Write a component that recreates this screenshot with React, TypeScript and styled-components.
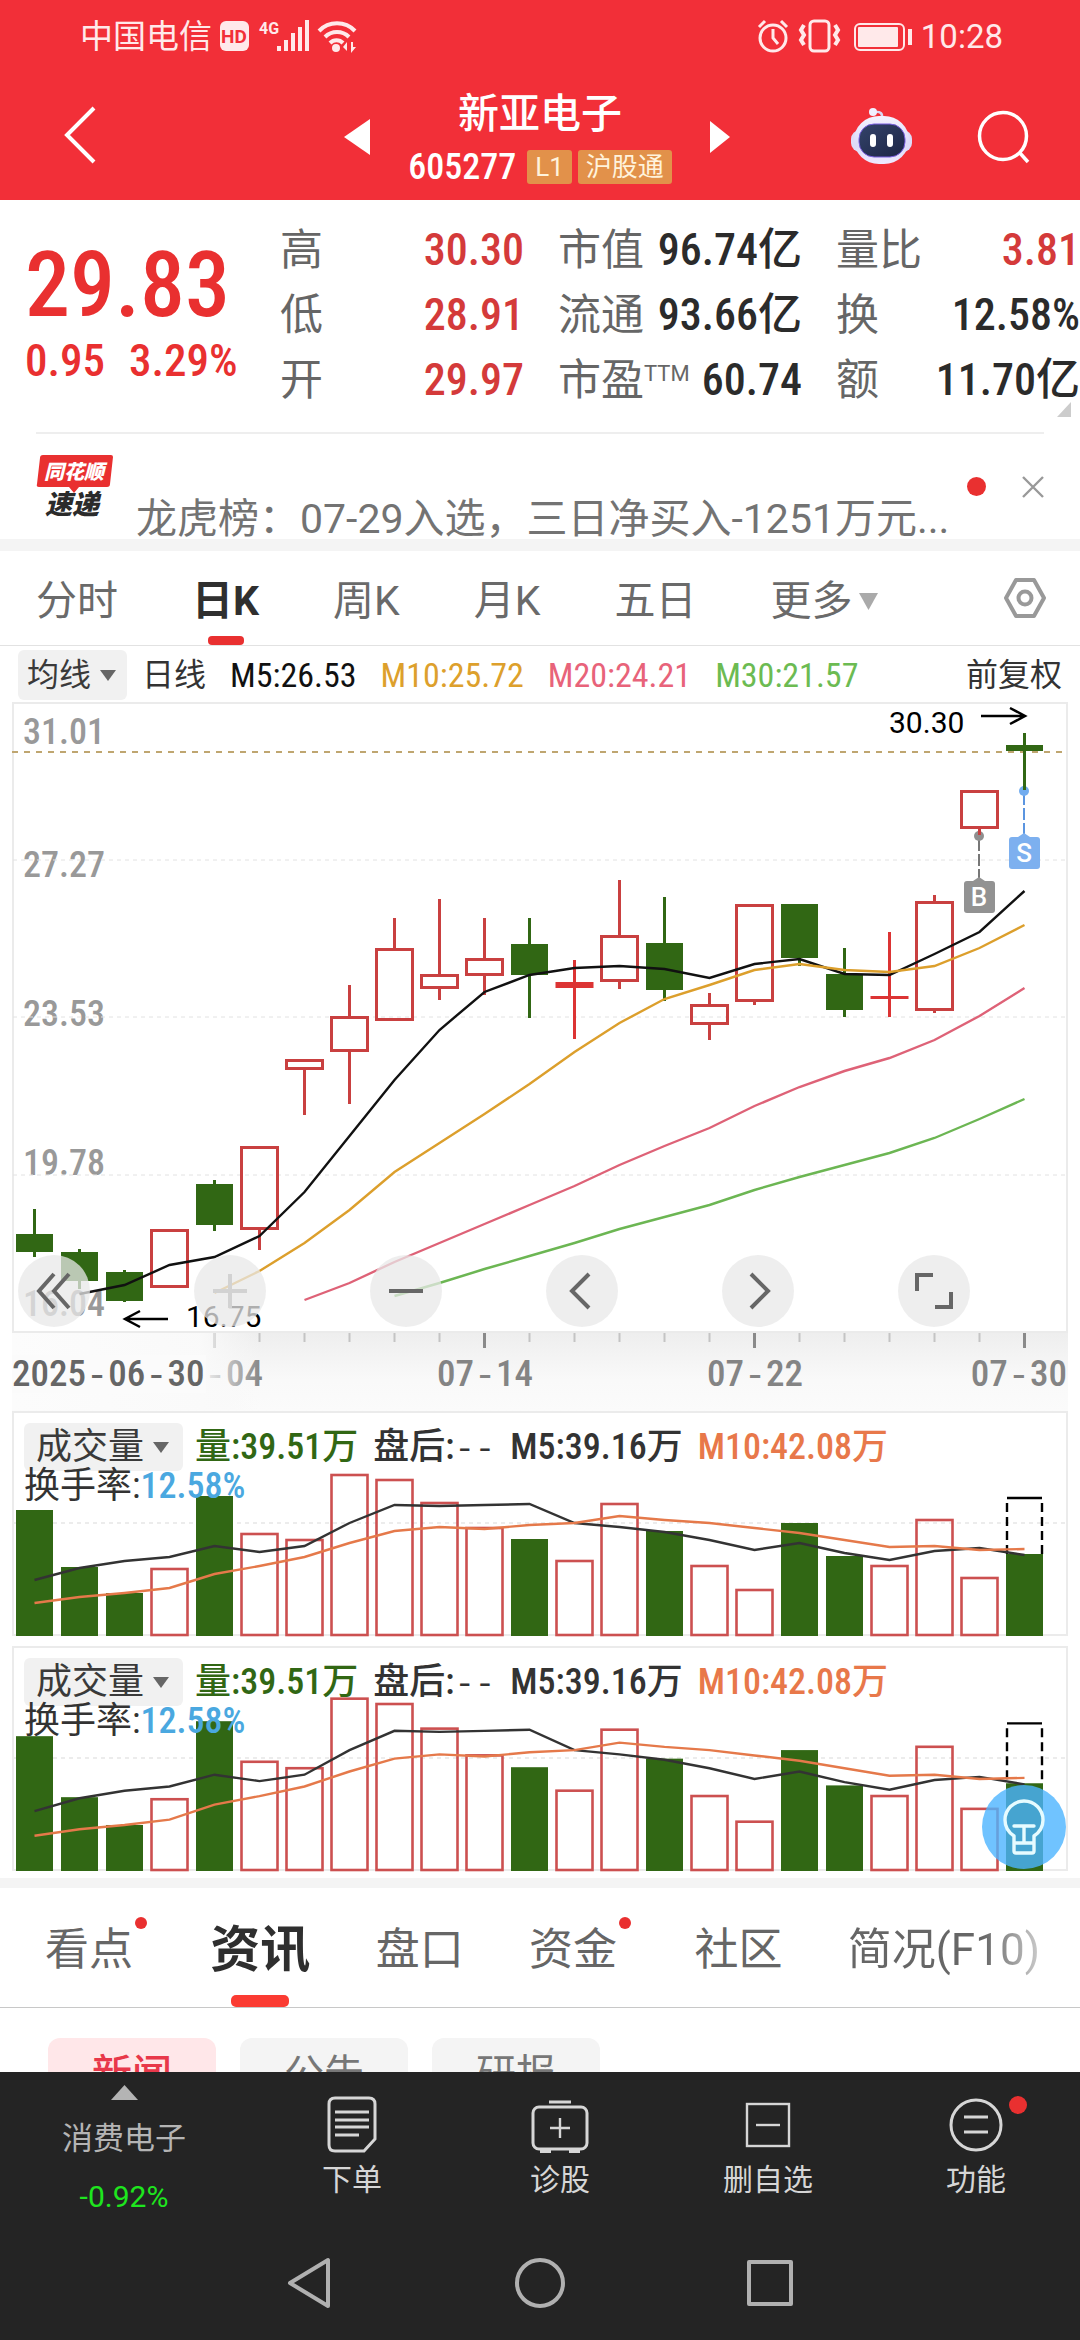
import React from "react";
import styled, { createGlobalStyle } from "styled-components";

const DIGITS = `"Roboto Condensed", Roboto, "Noto Sans CJK SC", sans-serif`;
const BODY = `Roboto, "Noto Sans CJK SC", sans-serif`;

const RED = "#e93030";
const RISE = "#c94040";
const FALL = "#316714";

const Global = createGlobalStyle`
  * { box-sizing: border-box; }
  body { margin: 0; background: #fff; font-family: ${BODY}; color: #333; }
  button, select { font: inherit; color: inherit; background: none; border: 0; padding: 0; margin: 0; }
  button { cursor: pointer; }
  a { color: inherit; text-decoration: none; }
  svg { display: block; flex: none; }
`;

const Screen = styled.div`
  display: flex;
  flex-direction: column;
  height: 100vh;
  overflow: hidden;
`;

const Content = styled.main`
  flex: 1;
  min-height: 0;
  overflow: hidden;
`;

/* ---------- header ---------- */

const Header = styled.header`
  background: #f22f38;
  color: #fff;
`;

const StatusBar = styled.div`
  display: flex;
  justify-content: space-between;
  align-items: center;
  height: 74px;
  padding: 0 77px 0 80px;
  font-size: 33px;
  line-height: 40px;
  color: #ffe9ea;
`;

const StatusGroup = styled.div`
  display: flex;
  align-items: center;
  gap: 8px;
`;

const TitleBar = styled.div`
  display: grid;
  grid-template-columns: 1fr auto 1fr;
  align-items: center;
  height: 126px;
  padding: 0 50px 0 44px;
`;

const TitleCenter = styled.div`
  display: flex;
  align-items: center;
  gap: 38px;
`;

const TitleText = styled.div`
  display: flex;
  flex-direction: column;
  align-items: center;
  gap: 12px;
`;

const StockName = styled.h1`
  margin: 0;
  font-size: 41px;
  line-height: 48px;
  font-weight: 500;
`;

const CodeLine = styled.div`
  display: flex;
  align-items: center;
  gap: 6px;
  font-family: ${DIGITS};
  font-size: 36px;
  line-height: 34px;
  font-weight: 500;
`;

const Tag = styled.span`
  padding: 0 8px;
  border-radius: 3px;
  background: #e2914a;
  color: #fff3dc;
  font-family: ${BODY};
  font-size: 26px;
  font-weight: 400;
  &:first-of-type { margin-left: 5px; }
`;

const TitleActions = styled.div`
  display: flex;
  align-items: center;
  justify-content: flex-end;
  gap: 64px;
`;

/* ---------- quote ---------- */

const Quote = styled.section`
  position: relative;
  display: flex;
  padding: 18px 0 19px;
  font-family: ${DIGITS};
`;

const PriceBlock = styled.div`
  width: 280px;
  padding: 20px 0 0 25px;
  color: ${RED};
  font-weight: 500;
`;

const Price = styled.div`
  font-size: 90px;
  line-height: 96px;
`;

const Change = styled.div`
  display: flex;
  gap: 24px;
  font-size: 45px;
  line-height: 54px;
`;

const Stats = styled.dl`
  flex: 1;
  display: grid;
  grid-template-columns: repeat(3, 1fr);
  column-gap: 34px;
  margin: 0;
`;

const Stat = styled.div`
  display: flex;
  justify-content: space-between;
  font-size: 43px;
  line-height: 65px;
`;

const StatLabel = styled.dt`
  color: #666;
  font-family: ${BODY};
  white-space: nowrap;
  sup { font-size: 22px; line-height: 0; vertical-align: 14px; }
`;

const StatValue = styled.dd<{ $up?: boolean }>`
  margin: 0;
  font-size: 44px;
  font-weight: 500;
  color: ${(p) => (p.$up ? "#d43a3a" : "#2b2b2b")};
  white-space: nowrap;
`;

const Corner = styled.svg`
  position: absolute;
  right: 9px;
  bottom: 15px;
`;

/* ---------- news ticker ---------- */

const Ticker = styled.section`
  display: flex;
  height: 107px;
  margin: 0 36px;
  border-top: 2px solid #eee;
  overflow: hidden;
`;

const TickerLogo = styled.svg`
  margin-top: 18px;
`;

const Headline = styled.a`
  align-self: flex-end;
  flex: 1;
  padding-left: 22px;
  font-size: 41px;
  line-height: 40px;
  color: #737373;
  white-space: nowrap;
`;

const TickerActions = styled.div`
  display: flex;
  align-items: center;
  gap: 36px;
`;

const Dot = styled.i<{ $size: number }>`
  display: block;
  width: ${(p) => p.$size}px;
  height: ${(p) => p.$size}px;
  border-radius: 50%;
  background: ${RED};
`;

const Band = styled.div<{ $h: number }>`
  height: ${(p) => p.$h}px;
  background: #f4f4f4;
`;

/* ---------- period tabs ---------- */

const Periods = styled.nav`
  display: flex;
  align-items: center;
  gap: 74px;
  height: 95px;
  padding: 0 34px 0 36px;
  border-bottom: 1px solid #e2e2e2;
`;

const Period = styled.button<{ $on?: boolean }>`
  position: relative;
  display: flex;
  align-items: center;
  gap: 6px;
  height: 94px;
  font-size: 41px;
  line-height: 88px;
  padding-top: 6px;
  font-weight: ${(p) => (p.$on ? 700 : 400)};
  color: ${(p) => (p.$on ? "#2f2f2f" : "#6a6a6a")};
  white-space: nowrap;
  &::after {
    content: "";
    display: ${(p) => (p.$on ? "block" : "none")};
    position: absolute;
    left: 50%;
    bottom: 0;
    width: 36px;
    height: 9px;
    margin-left: -18px;
    border-radius: 4px;
    background: ${RED};
  }
`;

const Settings = styled.button`
  margin-left: auto;
`;

/* ---------- moving averages ---------- */

const Averages = styled.div`
  display: flex;
  align-items: center;
  height: 56px;
  padding: 2px 18px 0;
  gap: 15px;
  font-size: 32px;
  line-height: 50px;
`;

const AverageList = styled.div`
  display: flex;
  flex: 1;
  gap: 24px;
`;

const Average = styled.span<{ $c: string }>`
  color: ${(p) => p.$c};
  font-family: ${DIGITS};
  font-size: 34px;
`;

const Picker = styled.label<{ $large?: boolean }>`
  display: flex;
  align-items: center;
  gap: 8px;
  height: ${(p) => (p.$large ? 48 : 50)}px;
  padding: 0 ${(p) => (p.$large ? 14 : 11)}px 0 ${(p) => (p.$large ? 12 : 9)}px;
  border-radius: 6px;
  background: #f1f1f1;
  color: #3a3a3a;
  select { appearance: none; line-height: 46px; outline: 0; }
`;

/* ---------- charts ---------- */

const Charts = styled.section`
  display: flex;
  flex-direction: column;
  gap: 10px;
  padding: 0 12px 7px;
`;

const ChartBox = styled.div`
  position: relative;
`;

const Plot = styled.svg`
  width: 100%;
  height: auto;
  overflow: visible;
  font-family: ${DIGITS};
`;

const ChartControls = styled.div`
  position: absolute;
  left: 6px;
  top: 553px;
  display: flex;
  gap: 104px;
`;

const RoundButton = styled.button<{ $dim?: boolean }>`
  display: grid;
  place-items: center;
  width: 72px;
  height: 72px;
  border-radius: 50%;
  background: rgba(232, 232, 232, 0.75);
  color: ${(p) => (p.$dim ? "#d2d2d2" : "#666")};
`;

const VolumeBox = styled.div`
  position: relative;
  display: grid;
  & > * { grid-area: 1 / 1; }
`;

const VolumeLegend = styled.div`
  z-index: 1;
  padding: 12px 12px 0;
  font-family: ${DIGITS};
  font-size: 36px;
  white-space: nowrap;
`;

const LegendRow = styled.div`
  display: flex;
  align-items: center;
  gap: 15px;
  height: 48px;
  line-height: 48px;
  & > :first-child { margin-right: -3px; }
`;

const LegendItem = styled.span<{ $c: string }>`
  color: ${(p) => p.$c};
  font-weight: 500;
`;

const Dashes = styled.span`
  font-family: "Liberation Mono", monospace;
  font-size: 34px;
  line-height: 0;
`;

const Turnover = styled.div`
  height: 30px;
  line-height: 30px;
  color: #333;
  b { color: #4aa8e0; font-weight: 500; }
`;

const Assistant = styled.button`
  position: absolute;
  right: 2px;
  bottom: 2px;
  z-index: 2;
  display: grid;
  place-items: center;
  width: 84px;
  height: 84px;
  border-radius: 50%;
  background: rgba(76, 180, 255, 0.8);
`;

/* ---------- info tabs ---------- */

const InfoTabs = styled.nav`
  display: flex;
  justify-content: space-between;
  align-items: center;
  height: 120px;
  padding: 0 40px 0 45px;
  border-bottom: 1px solid #c8c8c8;
`;

const InfoTab = styled.a<{ $on?: boolean; $fade?: boolean; $dot?: boolean }>`
  position: relative;
  height: 119px;
  margin-right: ${(p) => (p.$dot ? 12 : 0)}px;
  font-size: ${(p) => (p.$on ? 50 : 44)}px;
  line-height: 124px;
  font-weight: ${(p) => (p.$on ? 700 : 400)};
  color: ${(p) => (p.$on ? "#2f2f2f" : "#666")};
  white-space: nowrap;
  ${(p) =>
    p.$fade &&
    `background: linear-gradient(90deg, #666 70%, #ccc 100%); background-clip: text; color: transparent;`}
  & > i { position: absolute; right: -14px; top: 29px; }
  &::after {
    content: "";
    display: ${(p) => (p.$on ? "block" : "none")};
    position: absolute;
    left: 50%;
    bottom: 0;
    width: 58px;
    height: 12px;
    margin-left: -29px;
    border-radius: 5px;
    background: #fb3b32;
  }
`;

const Chips = styled.div`
  display: flex;
  gap: 24px;
  padding: 30px 48px;
`;

const Chip = styled.button<{ $on?: boolean }>`
  width: 168px;
  height: 74px;
  border-radius: 12px;
  background: ${(p) => (p.$on ? "#ffe7e9" : "#f4f4f4")};
  color: ${(p) => (p.$on ? "#e8384a" : "#777")};
  font-size: 40px;
  line-height: 74px;
  font-weight: ${(p) => (p.$on ? 500 : 400)};
`;

/* ---------- bottom dock ---------- */

const Dock = styled.footer`
  background: #242424;
  color: #d6d6d6;
`;

const Actions = styled.div`
  display: grid;
  grid-template-columns: 248px repeat(4, 1fr);
  height: 154px;
  font-size: 30px;
  line-height: 36px;
`;

const IndexLink = styled.a`
  display: flex;
  flex-direction: column;
  align-items: center;
  padding-top: 13px;
  font-size: 31px;
  line-height: 36px;
  color: #b4b4b4;
  b { margin-top: 22px; font-size: 30px; font-weight: 400; color: #1ee61e; }
  span { margin-top: 21px; }
`;

const Action = styled.button`
  position: relative;
  display: flex;
  flex-direction: column;
  align-items: center;
  justify-content: flex-start;
  padding-top: 24px;
  gap: 8px;
  & > i { position: absolute; left: 50%; top: 24px; margin-left: 33px; }
`;

const SystemNav = styled.div`
  display: flex;
  justify-content: center;
  align-items: center;
  gap: 174px;
  height: 114px;
`;

/* ---------- data ---------- */

type Candle = [high: number, top: number, bottom: number, low: number, up: boolean];

const candles: Candle[] = [
  [1210, 1235, 1253, 1258, false],
  [1250, 1253, 1282, 1290, false],
  [1271, 1273, 1302, 1303, false],
  [1230, 1230, 1289, 1289, true],
  [1181, 1185, 1226, 1232, false],
  [1147, 1147, 1231, 1251, true],
  [1060, 1060, 1071, 1116, true],
  [986, 1017, 1053, 1105, true],
  [919, 949, 1022, 1022, true],
  [900, 975, 990, 1001, true],
  [919, 959, 977, 996, true],
  [919, 945, 976, 1019, false],
  [961, 983, 989, 1040, true],
  [881, 936, 983, 990, true],
  [898, 944, 991, 1002, false],
  [994, 1005, 1026, 1041, true],
  [905, 905, 1003, 1006, true],
  [905, 905, 959, 967, false],
  [949, 975, 1011, 1018, false],
  [933, 997, 1000, 1018, true],
  [896, 902, 1012, 1014, true],
  [791, 791, 830, 836, true],
  [734, 746, 752, 791, false],
];

const priceLines = [
  { color: "#111", from: 1, ys: [1295, 1286, 1266, 1258, 1237, 1193, 1137, 1081, 1031, 993, 976, 969, 967, 970, 979, 965, 960, 975, 976, 955, 933, 892] },
  { color: "#dc9f2c", from: 4, ys: [1294, 1272, 1244, 1211, 1173, 1144, 1115, 1085, 1053, 1024, 1000, 986, 971, 965, 971, 973, 967, 949, 926] },
  { color: "#de6277", from: 6, ys: [1301, 1284, 1263, 1244, 1225, 1206, 1187, 1166, 1147, 1129, 1107, 1088, 1072, 1059, 1041, 1017, 989] },
  { color: "#6cb653", from: 8, ys: [1297, 1284, 1270, 1257, 1244, 1230, 1218, 1206, 1191, 1178, 1166, 1154, 1139, 1120, 1100] },
];

const priceScale: [string, number][] = [
  ["31.01", 745],
  ["27.27", 878],
  ["23.53", 1027],
  ["19.78", 1176],
  ["16.04", 1317],
];

const volumes = [126, 69, 43, 68, 140, 103, 97, 162, 157, 134, 109, 97, 76, 133, 105, 71, 47, 113, 80, 71, 117, 59, 82];
const volumeUp = [0, 0, 0, 1, 0, 1, 1, 1, 1, 1, 1, 0, 1, 1, 0, 1, 1, 0, 0, 1, 1, 1, 0];
const volume5 = [56, 68, 75, 79, 90, 84, 90, 113, 131, 130, 131, 132, 113, 109, 104, 96, 86, 93, 83, 76, 85, 88, 81];
const volume10 = [33, 39, 43, 48, 62, 70, 79, 93, 105, 109, 107, 111, 113, 120, 116, 113, 108, 103, 96, 89, 90, 86, 87];
const projected = 138;

const colX = (i: number) => 34.5 + 45 * i;
const toPoints = (ys: number[], from = 0) => ys.map((y, i) => `${colX(i + from)},${y}`).join(" ");

/* ---------- icons ---------- */

const Caret = ({ w = 16, h = 11, color = "#666" }: { w?: number; h?: number; color?: string }) => (
  <svg width={w} height={h} viewBox="0 0 16 11" preserveAspectRatio="none" aria-hidden="true">
    <path d="M0 0h16L8 11z" fill={color} />
  </svg>
);

const SignalIcons = () => (
  <svg width="138" height="36" viewBox="220 19 138 36" fill="#ffe9ea" aria-label="HD 4G">
    <rect x="220" y="21" width="29" height="30" rx="6" />
    <text x="234" y="43" fontSize="19" fontWeight="700" textAnchor="middle" fill="#f22f38">HD</text>
    <text x="259" y="34" fontSize="16" fontWeight="700">4G</text>
    <path d="M277 46h4v5h-4zM284 40h4v11h-4zM291 33h4v18h-4zM298 27h4v24h-4zM305 20h4v31h-4z" />
    <g fill="none" stroke="#ffe9ea" strokeWidth="4">
      <path d="M319 31a25 25 0 0 1 36 0" />
      <path d="M325 37a17 17 0 0 1 24 0" />
      <path d="M330 43a9 9 0 0 1 13 0" />
    </g>
    <circle cx="336" cy="48" r="4" />
    <path d="M347 42v9l-4-4zM351 42v11l5-6h-3v-5z" />
  </svg>
);

const StatusIcons = () => (
  <svg width="156" height="36" viewBox="755 19 156 36" fill="none" stroke="#ffe9ea" strokeWidth="3" aria-hidden="true">
    <circle cx="771" cy="38" r="13" />
    <path d="M771 29v9l5 6M757 27l6-6M785 27l-6-6" />
    <rect x="808" y="21" width="19" height="30" rx="4" />
    <path d="M802 25l-3 5 3 5-3 5 3 5M833 25l3 5-3 5 3 5-3 5" strokeWidth="4" />
    <rect x="853" y="24" width="49" height="26" rx="5" strokeWidth="2" />
    <rect x="856" y="27" width="40" height="20" rx="1" fill="#ffe9ea" stroke="none" />
    <path d="M908 29v16" strokeWidth="4" />
  </svg>
);

const Robot = () => (
  <svg width="61" height="58" viewBox="0 0 61 58" aria-hidden="true">
    <defs>
      <linearGradient id="head" x1="0" y1="0" x2="0" y2="1">
        <stop offset="0" stopColor="#f4f2ff" />
        <stop offset="0.6" stopColor="#dcdaf8" />
        <stop offset="1" stopColor="#efeaff" />
      </linearGradient>
      <linearGradient id="visor" x1="0" y1="0" x2="1" y2="1">
        <stop offset="0" stopColor="#34436a" />
        <stop offset="1" stopColor="#1c2545" />
      </linearGradient>
    </defs>
    <path d="M31 10q1-7-7-6" fill="none" stroke="#d9d6f2" strokeWidth="2.5" />
    <circle cx="22" cy="4" r="4" fill="#f1efff" />
    <rect x="0" y="22" width="61" height="22" rx="9" fill="#dedcf8" />
    <rect x="3" y="8" width="55" height="48" rx="25" fill="url(#head)" />
    <rect x="8" y="16" width="46" height="33" rx="15" fill="url(#visor)" stroke="#7a5fe0" strokeWidth="1" />
    <path d="M22 29v7M39 29v7" stroke="#fff" strokeWidth="6" strokeLinecap="round" />
  </svg>
);

/* ---------- chart parts ---------- */

const DateText = ({ x, color, parts, anchor }: { x: number; color: string; parts: string[]; anchor: "start" | "middle" | "end" }) => (
  <text x={x} y={1387} fontSize="37" fontWeight="500" fill={color} textAnchor={anchor}>
    {parts.map((p, i) => (
      <React.Fragment key={i}>
        {i > 0 && <tspan fontFamily="Liberation Mono, monospace">-</tspan>}
        {p}
      </React.Fragment>
    ))}
  </text>
);

const PricePlot = () => (
  <Plot viewBox="12 703 1056 699" role="img" aria-label="日K">
    <defs>
      <linearGradient id="axisShade" x1="0" y1="0" x2="0" y2="1">
        <stop offset="0" stopColor="#eeeeee" />
        <stop offset="0.6" stopColor="#f9f9f9" />
        <stop offset="1" stopColor="#fbfbfb" />
      </linearGradient>
      <linearGradient id="axisFade" x1="0" y1="0" x2="1" y2="0">
        <stop offset="0" stopColor="#fcfcfc" />
        <stop offset="0.76" stopColor="#fafafa" stopOpacity="0.95" />
        <stop offset="1" stopColor="#f8f8f8" stopOpacity="0" />
      </linearGradient>
    </defs>
    <rect x="12" y="1334" width="1056" height="78" fill="url(#axisShade)" />
    <rect x="13" y="704" width="1054" height="629" fill="#fff" stroke="#ebebeb" strokeWidth="2" />
    <g fontSize="36" fontWeight="500" fill="#999">
      {priceScale.map(([t, y]) => (
        <text key={t} x="23" y={y}>{t}</text>
      ))}
    </g>
    <path d="M13 861H1066M13 1018H1066M13 1176H1066" stroke="#e2e2e2" strokeWidth="1" strokeDasharray="4 4" />
    <path d="M12 753H1066" stroke="#bfa670" strokeWidth="2" strokeDasharray="6 6" />
    <path d="M979 840V882" stroke="#777" strokeWidth="2" strokeDasharray="12 3" />
    <circle cx="979" cy="837" r="5" fill="#8f8f8f" />
    <path d="M1024 794V838" stroke="#5b95e0" strokeWidth="2" strokeDasharray="12 3" />
    <circle cx="1024" cy="792" r="5" fill="#72acef" />
    {candles.map(([high, top, bottom, low, up], i) => {
      const x = colX(i);
      if (!up) {
        return (
          <g key={i} fill={FALL}>
            <rect x={x - 1.5} y={high} width="3" height={low - high} />
            <rect x={x - 18.5} y={top} width="37" height={bottom - top} />
          </g>
        );
      }
      if (bottom - top < 7) {
        return (
          <g key={i} fill="#dc3434">
            <rect x={x - 1.5} y={high} width="3" height={low - high} />
            <rect x={x - 19} y={top} width="38" height={bottom - top} />
          </g>
        );
      }
      return (
        <g key={i} stroke={RISE} strokeWidth="3" fill="none">
          <path d={`M${x} ${high}V${top}M${x} ${bottom}V${low}`} />
          <rect x={x - 18} y={top + 1.5} width="36" height={bottom - top - 3} />
        </g>
      );
    })}
    <g fill="none" strokeWidth="2.4">
      {priceLines.map((l) => (
        <polyline key={l.color} points={toPoints(l.ys, l.from)} stroke={l.color} />
      ))}
    </g>
    <g fontSize="30" fill="#000" fontFamily="Roboto">
      <text x="889" y="734">30.30</text>
      <text x="186" y="1328">16.75</text>
    </g>
    <path d="M981 717H1024M1010 709L1025 717L1010 725M168 1320H125M140 1312L125 1320L140 1328" fill="none" stroke="#000" strokeWidth="2.5" />
    <path d="M973 882L979 878L985 882z" fill="#929292" />
    <rect x="964" y="882" width="31" height="32" rx="3" fill="#929292" />
    <path d="M1018 838L1024 834L1030 838z" fill="#7db0ef" />
    <rect x="1009" y="838" width="31" height="32" rx="3" fill="#7db0ef" />
    <g fontSize="26" fontWeight="500" fill="#fff" textAnchor="middle" fontFamily="Roboto">
      <text x="979" y="907">B</text>
      <text x="1024" y="863">S</text>
    </g>
    {candles.slice(4).map((_, k) => {
      const i = k + 4;
      const major = (i - 4) % 6 === 0;
      return (
        <rect key={i} x={colX(i) - (major ? 1.5 : 1)} y="1334" width={major ? 3 : 2} height={major ? 15 : 9} fill={major ? "#8a8a8a" : "#c4c4c4"} />
      );
    })}
    <DateText x={215} color="#888" parts={["07", "04"]} anchor="middle" />
    <rect x="12" y="1334" width="248" height="77" fill="url(#axisFade)" />
    <rect x="12" y="1356" width="194" height="38" fill="#fbfbfb" />
    <DateText x={12} color="#666" parts={["2025", "06", "30"]} anchor="start" />
    <DateText x={485} color="#848484" parts={["07", "14"]} anchor="middle" />
    <DateText x={755} color="#848484" parts={["07", "22"]} anchor="middle" />
    <DateText x={1067} color="#848484" parts={["07", "30"]} anchor="end" />
  </Plot>
);

const VolumePanel = ({ scale, children }: { scale: number; children?: React.ReactNode }) => {
  const y = (v: number) => 225 - v * scale;
  return (
    <VolumeBox>
      <Plot viewBox="12 0 1056 225" role="img" aria-label="成交量">
        <rect x="13" y="1" width="1054" height="223" fill="#fff" stroke="#ebebeb" strokeWidth="2" />
        <path d="M13 112H1066" stroke="#ececec" strokeWidth="2" strokeDasharray="4 4" />
        {volumes.map((v, i) =>
          volumeUp[i] ? (
            <rect key={i} x={colX(i) - 18} y={y(v) + 1} width="36" height={v * scale - 2} fill="none" stroke="#cc5050" strokeWidth="2.6" />
          ) : (
            <rect key={i} x={colX(i) - 18.5} y={y(v)} width="37" height={v * scale} fill={FALL} />
          ),
        )}
        <path d={`M1007 ${y(projected)}H1042`} stroke="#000" strokeWidth="2.4" />
        <path d={`M1007 ${y(projected) + 5}V${y(82)}M1042 ${y(projected) + 5}V${y(82)}`} stroke="#000" strokeWidth="2.4" strokeDasharray="9 5" />
        <g fill="none" strokeWidth="2.4">
          <polyline points={toPoints(volume5.map(y))} stroke="#333" />
          <polyline points={toPoints(volume10.map(y))} stroke="#e5794a" />
        </g>
      </Plot>
      <VolumeLegend>
        <LegendRow>
          <Picker $large>
            <select aria-label="指标">
              <option>成交量</option>
            </select>
            <Caret />
          </Picker>
          <LegendItem $c={FALL}>量:39.51万</LegendItem>
          <LegendItem $c="#333">
            盘后:<Dashes>--</Dashes>
          </LegendItem>
          <LegendItem $c="#333">M5:39.16万</LegendItem>
          <LegendItem $c="#e8784a">M10:42.08万</LegendItem>
        </LegendRow>
        <Turnover>
          换手率:<b>12.58%</b>
        </Turnover>
      </VolumeLegend>
      {children}
    </VolumeBox>
  );
};

/* ---------- page ---------- */

const stats: { label: React.ReactNode; value: string; up?: boolean }[] = [
  { label: "高", value: "30.30", up: true },
  { label: "市值", value: "96.74亿" },
  { label: "量比", value: "3.81", up: true },
  { label: "低", value: "28.91", up: true },
  { label: "流通", value: "93.66亿" },
  { label: "换", value: "12.58%" },
  { label: "开", value: "29.97", up: true },
  { label: <>市盈<sup>TTM</sup></>, value: "60.74" },
  { label: "额", value: "11.70亿" },
];

export default function App() {
  return (
    <Screen>
      <Global />
      <Header>
        <StatusBar>
          <StatusGroup>
            <span>中国电信</span>
            <SignalIcons />
          </StatusGroup>
          <StatusGroup>
            <StatusIcons />
            <span>10:28</span>
          </StatusGroup>
        </StatusBar>
        <TitleBar>
          <div>
            <button aria-label="返回">
              <svg width="56" height="58" viewBox="-15 0 56 58" fill="none" stroke="#fff" strokeWidth="4">
                <path d="M35 2L8 29L35 56" />
              </svg>
            </button>
          </div>
          <TitleCenter>
            <button aria-label="上一只">
              <svg width="26" height="36" viewBox="0 0 26 36"><path d="M26 0v36L0 18z" fill="#fff" /></svg>
            </button>
            <TitleText>
              <StockName>新亚电子</StockName>
              <CodeLine>
                605277
                <Tag>L1</Tag>
                <Tag>沪股通</Tag>
              </CodeLine>
            </TitleText>
            <button aria-label="下一只">
              <svg width="20" height="32" viewBox="0 0 20 32"><path d="M0 0v32L20 16z" fill="#fff" /></svg>
            </button>
          </TitleCenter>
          <TitleActions>
            <button aria-label="智能助手"><Robot /></button>
            <button aria-label="搜索">
              <svg width="54" height="54" viewBox="0 0 54 54" fill="none" stroke="#fff" strokeWidth="3.5">
                <circle cx="27" cy="26" r="23.5" />
                <path d="M43 42l9 10" />
              </svg>
            </button>
          </TitleActions>
        </TitleBar>
      </Header>

      <Content>
        <Quote>
          <PriceBlock>
            <Price>29.83</Price>
            <Change>
              <span>0.95</span>
              <span>3.29%</span>
            </Change>
          </PriceBlock>
          <Stats>
            {stats.map((s) => (
              <Stat key={s.value}>
                <StatLabel>{s.label}</StatLabel>
                <StatValue $up={s.up}>{s.value}</StatValue>
              </Stat>
            ))}
          </Stats>
          <Corner width="14" height="15" viewBox="0 0 14 15" aria-hidden="true">
            <path d="M14 0v15H0z" fill="#ccc" />
          </Corner>
        </Quote>

        <Ticker>
          <TickerLogo width="78" height="76" viewBox="0 0 78 76" fontStyle="italic" fontWeight="900" textAnchor="middle" fontFamily="Noto Sans CJK SC">
            <path d="M7 3h68q2 0 2 2l-3 27q0 3-3 3H43l-5 6-5-6H3q-3 0-2-3L4 6q0-3 3-3z" fill={RED} />
            <text x="38" y="27" fontSize="20" fill="#fff">同花顺</text>
            <text x="36" y="62" fontSize="27" fill="#2b2b2b">速递</text>
          </TickerLogo>
          <Headline href="#news">龙虎榜：07-29入选，三日净买入-1251万元...</Headline>
          <TickerActions>
            <Dot $size={19} />
            <button aria-label="关闭">
              <svg width="22" height="22" viewBox="0 0 22 22" stroke="#999" strokeWidth="2.4"><path d="M1 1l20 20M21 1L1 21" /></svg>
            </button>
          </TickerActions>
        </Ticker>
        <Band $h={12} />

        <Periods>
          <Period>分时</Period>
          <Period $on>日K</Period>
          <Period>周K</Period>
          <Period>月K</Period>
          <Period>五日</Period>
          <Period>更多<Caret w={19} h={17} color="#aaa" /></Period>
          <Settings aria-label="设置">
            <svg width="42" height="42" viewBox="0 0 42 42" fill="none" stroke="#999" strokeWidth="4" strokeLinejoin="round">
              <path d="M12 3h18l10 18-10 18H12L2 21z" />
              <circle cx="21" cy="21" r="6.5" />
            </svg>
          </Settings>
        </Periods>

        <Averages>
          <Picker>
            <select aria-label="主图指标">
              <option>均线</option>
            </select>
            <Caret />
          </Picker>
          <AverageList>
            <span>日线</span>
            <Average $c="#111">M5:26.53</Average>
            <Average $c="#dda02c">M10:25.72</Average>
            <Average $c="#e8637a">M20:24.21</Average>
            <Average $c="#6cbb52">M30:21.57</Average>
          </AverageList>
          <button>前复权</button>
        </Averages>

        <Charts>
          <ChartBox>
            <PricePlot />
            <ChartControls>
              <RoundButton aria-label="最早">
                <svg width="36" height="38" viewBox="0 0 36 38" fill="none" stroke="currentColor" strokeWidth="4"><path d="M18 2L3 19L18 36M33 2L18 19L33 36" /></svg>
              </RoundButton>
              <RoundButton aria-label="放大" $dim>
                <svg width="34" height="34" viewBox="0 0 34 34" stroke="currentColor" strokeWidth="4"><path d="M0 17H34M17 0V34" /></svg>
              </RoundButton>
              <RoundButton aria-label="缩小">
                <svg width="34" height="34" viewBox="0 0 34 34" stroke="currentColor" strokeWidth="4"><path d="M0 17H34" /></svg>
              </RoundButton>
              <RoundButton aria-label="左移">
                <svg width="26" height="38" viewBox="0 0 26 38" fill="none" stroke="currentColor" strokeWidth="4"><path d="M20 2L3 19L20 36" /></svg>
              </RoundButton>
              <RoundButton aria-label="右移">
                <svg width="26" height="38" viewBox="0 0 26 38" fill="none" stroke="currentColor" strokeWidth="4"><path d="M6 2L23 19L6 36" /></svg>
              </RoundButton>
              <RoundButton aria-label="全屏">
                <svg width="38" height="38" viewBox="0 0 38 38" fill="none" stroke="currentColor" strokeWidth="4"><path d="M2 19V3H18M20 35H36V20" /></svg>
              </RoundButton>
            </ChartControls>
          </ChartBox>
          <VolumePanel scale={1} />
          <VolumePanel scale={1.07}>
            <Assistant aria-label="提示">
              <svg width="42" height="56" viewBox="0 0 42 56" fill="none" stroke="#e6fbff" strokeWidth="3.4" strokeLinejoin="round" strokeLinecap="round">
                <path d="M11 44v-7C5 33 2 27 2 21a19 19 0 0 1 38 0c0 6-3 12-9 16v7M11 44h20v8q0 2-2 2H13q-2 0-2-2zM11 27h20M21 27v17" />
              </svg>
            </Assistant>
          </VolumePanel>
        </Charts>
        <Band $h={10} />

        <InfoTabs>
          <InfoTab href="#view" $dot>看点<Dot $size={12} /></InfoTab>
          <InfoTab href="#news" $on>资讯</InfoTab>
          <InfoTab href="#pan">盘口</InfoTab>
          <InfoTab href="#fund" $dot>资金<Dot $size={12} /></InfoTab>
          <InfoTab href="#club">社区</InfoTab>
          <InfoTab href="#f10" $fade>简况(F10)</InfoTab>
        </InfoTabs>
        <Chips>
          <Chip $on>新闻</Chip>
          <Chip>公告</Chip>
          <Chip>研报</Chip>
        </Chips>
      </Content>

      <Dock>
        <Actions>
          <IndexLink href="#index">
            <svg width="27" height="15" viewBox="0 0 27 15" aria-hidden="true"><path d="M0 15L13.5 0L27 15z" fill="#b4b4b4" /></svg>
            <span>消费电子</span>
            <b>-0.92%</b>
          </IndexLink>
          <Action>
            <svg width="50" height="58" viewBox="0 0 50 58" fill="none" stroke="#d6d6d6" strokeWidth="3">
              <path d="M8 2h34q6 0 6 6v35L37 55H8q-6 0-6-6V8q0-6 6-6zM8 16h34M8 24h34M8 31h34M8 39h24" />
            </svg>
            下单
          </Action>
          <Action>
            <svg width="58" height="58" viewBox="0 0 58 58" fill="none" stroke="#d6d6d6" strokeWidth="3">
              <path d="M18 6h22" />
              <rect x="2" y="11" width="54" height="42" rx="6" />
              <path d="M29 22v20M19 32h20" strokeWidth="2.4" />
              <path d="M9 55h11M38 55h11" strokeWidth="4" />
            </svg>
            诊股
          </Action>
          <Action>
            <svg width="46" height="58" viewBox="0 0 46 58" fill="none" stroke="#d6d6d6" strokeWidth="2.4">
              <rect x="2" y="8" width="42" height="42" />
              <path d="M11 29h24" />
            </svg>
            删自选
          </Action>
          <Action>
            <svg width="54" height="58" viewBox="0 0 54 58" fill="none" stroke="#d6d6d6" strokeWidth="3">
              <circle cx="27" cy="29" r="25" />
              <path d="M15 21h24M15 36h24" />
            </svg>
            功能
            <Dot $size={18} />
          </Action>
        </Actions>
        <SystemNav>
          <button aria-label="系统返回">
            <svg width="56" height="56" viewBox="0 0 56 56" fill="none" stroke="#b0b0b0" strokeWidth="4" strokeLinejoin="round"><path d="M46 5v46L8 28z" /></svg>
          </button>
          <button aria-label="主屏幕">
            <svg width="56" height="56" viewBox="0 0 56 56" fill="none" stroke="#b0b0b0" strokeWidth="4"><circle cx="28" cy="28" r="23" /></svg>
          </button>
          <button aria-label="最近任务">
            <svg width="56" height="56" viewBox="0 0 56 56" fill="none" stroke="#b0b0b0" strokeWidth="4" strokeLinejoin="round"><rect x="7" y="7" width="42" height="42" /></svg>
          </button>
        </SystemNav>
      </Dock>
    </Screen>
  );
}
